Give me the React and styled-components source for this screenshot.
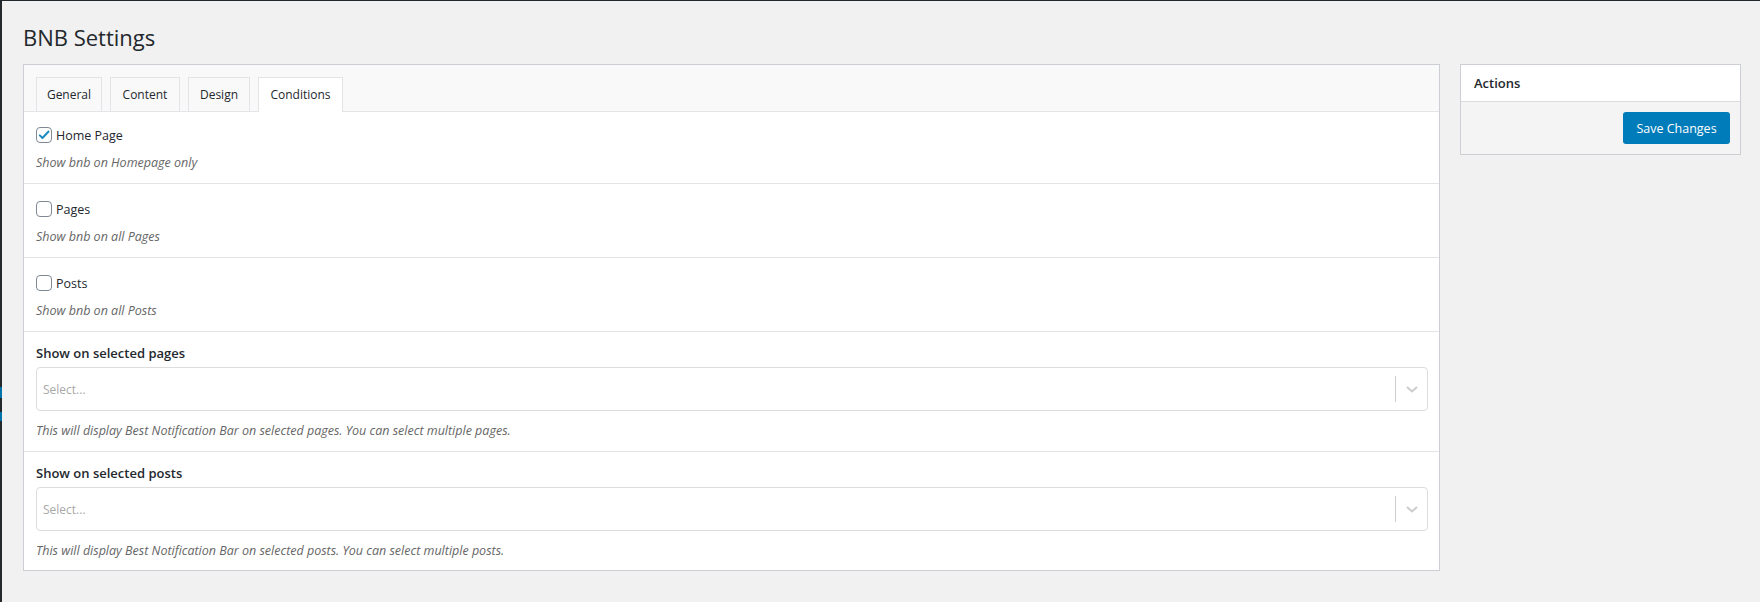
import React from "react";
import styled, { createGlobalStyle } from "styled-components";

const GlobalStyle = createGlobalStyle`
    html, body {
        margin: 0;
        padding: 0;
        background: #f1f1f1;
    }
    body {
        font-family: "Open Sans", "Noto Sans", sans-serif;
        color: #23282d;
        font-size: 13px;
    }
`;

const Screen = styled.div`
    width: 1760px;
    height: 602px;
    display: flex;
    border-top: 1px solid #23282d;
    box-sizing: border-box;
    overflow: hidden;
`;

const SideEdge = styled.div`
    width: 2px;
    flex: none;
    background: #23282d;
    position: relative;
    .mark {
        position: absolute;
        left: 0;
        width: 2px;
        background: #0073aa;
    }
`;

const Wrap = styled.div`
    flex: 1;
    padding: 0 19px 0 21px;
`;

const Title = styled.h1`
    margin: 0;
    padding: 22px 0 0;
    height: 63px;
    box-sizing: border-box;
    font-size: 22px;
    font-weight: 400;
    line-height: 29px;
    color: #23282d;
`;

const Columns = styled.div`
    display: flex;
    align-items: flex-start;
    gap: 20px;
`;

const Card = styled.div`
    flex: 1;
    background: #fff;
    border: 1px solid #ccd0d4;
`;

const TabBar = styled.div`
    display: flex;
    gap: 8px;
    padding: 12px 12px 0;
    background: #f9f9f9;
    border-bottom: 1px solid #e2e4e7;
    height: 47px;
    box-sizing: border-box;
`;

const Tab = styled.div`
    width: ${(p) => p.$w}px;
    box-sizing: border-box;
    text-align: center;
    line-height: 33px;
    font-size: 12px;
    border: 1px solid #e2e4e7;
    border-bottom: none;
    background: ${(p) => (p.$active ? "#fff" : "#f9f9f9")};
    margin-bottom: ${(p) => (p.$active ? "-1px" : "0")};
    height: ${(p) => (p.$active ? "35px" : "34px")};
    color: #23282d;
`;

const Row = styled.div`
    padding: ${(p) => (p.$first ? "13px 12px 11px" : "15px 12px 11px")};
    border-bottom: 1px solid #e2e4e7;
    &:last-child {
        border-bottom: none;
        padding-bottom: 10px;
    }
`;

const SelectRow = styled(Row)`
    padding: 11px 11px 11px 12px;
`;

const CheckLine = styled.label`
    display: flex;
    align-items: center;
    gap: 4px;
    height: 20px;
    font-size: 12.5px;
`;

const Box = styled.span`
    width: 16px;
    height: 16px;
    box-sizing: border-box;
    border: 1px solid #7e8993;
    border-radius: 4px;
    background: #fff;
    display: flex;
    align-items: center;
    justify-content: center;
    svg {
        display: block;
    }
`;

const Desc = styled.p`
    margin: 9px 0 0;
    font-size: 12.5px;
    line-height: 18px;
    font-style: italic;
    color: #666;
`;

const FieldLabel = styled.div`
    font-size: 13px;
    font-weight: 600;
    line-height: 20px;
`;

const SelectBox = styled.div`
    margin-top: 4px;
    height: 44px;
    box-sizing: border-box;
    border: 1px solid #ddd;
    border-radius: 4px;
    display: flex;
    align-items: center;
    background: #fff;
    .placeholder {
        flex: 1;
        padding-left: 6px;
        font-size: 12px;
        color: #a9a9a9;
    }
    .sep {
        width: 1px;
        height: 26px;
        background: #ccc;
    }
    .arrow {
        width: 31px;
        display: flex;
        justify-content: center;
    }
`;

const SelectDesc = styled(Desc)`
    margin-top: 11px;
`;

const Side = styled.div`
    width: 281px;
    box-sizing: border-box;
    flex: none;
    border: 1px solid #ccd0d4;
    background: #fff;
`;

const SideHead = styled.div`
    height: 36px;
    line-height: 36px;
    padding-left: 13px;
    font-size: 13px;
    font-weight: 600;
    border-bottom: 1px solid #dcdcde;
`;

const SideFoot = styled.div`
    display: flex;
    justify-content: flex-end;
    padding: 10px 10px 10px;
    background: #f4f4f4;
`;

const Button = styled.button`
    height: 32px;
    width: 107px;
    border: none;
    border-radius: 3px;
    background: #007cba;
    color: #fff;
    font-family: inherit;
    font-size: 12.5px;
    padding: 0;
`;

function Checkbox({ checked }) {
    return (
        <Box>
            {checked && (
                <svg width="14" height="14" viewBox="0 0 20 20">
                    <path d="M4 10.5l3.8 3.8L16.5 5" fill="none" stroke="#1e8cbe" strokeWidth="2.8" strokeLinecap="round" strokeLinejoin="round" />
                </svg>
            )}
        </Box>
    );
}

function Select() {
    return (
        <SelectBox>
            <span className="placeholder">Select...</span>
            <span className="sep" />
            <span className="arrow">
                <svg width="14" height="10" viewBox="0 0 14 10">
                    <path d="M2 3l5 4.5L12 3" fill="none" stroke="#ccc" strokeWidth="2" />
                </svg>
            </span>
        </SelectBox>
    );
}

const tabs = [
    { name: "General", w: 66 },
    { name: "Content", w: 70 },
    { name: "Design", w: 62 },
    { name: "Conditions", w: 85, active: true },
];

const checks = [
    { label: "Home Page", desc: "Show bnb on Homepage only", checked: true },
    { label: "Pages", desc: "Show bnb on all Pages" },
    { label: "Posts", desc: "Show bnb on all Posts" },
];

export default function App() {
    return (
        <>
            <GlobalStyle />
            <Screen>
                <SideEdge>
                    <span className="mark" style={{ top: 386, height: 11 }} />
                    <span className="mark" style={{ top: 411, height: 9 }} />
                </SideEdge>
                <Wrap>
                    <Title>BNB Settings</Title>
                    <Columns>
                        <Card>
                            <TabBar>
                                {tabs.map((t) => (
                                    <Tab key={t.name} $w={t.w} $active={t.active}>
                                        {t.name}
                                    </Tab>
                                ))}
                            </TabBar>
                            {checks.map((c, i) => (
                                <Row key={c.label} $first={i === 0}>
                                    <CheckLine>
                                        <Checkbox checked={c.checked} />
                                        {c.label}
                                    </CheckLine>
                                    <Desc>{c.desc}</Desc>
                                </Row>
                            ))}
                            <SelectRow>
                                <FieldLabel>Show on selected pages</FieldLabel>
                                <Select />
                                <SelectDesc>
                                    This will display Best Notification Bar on selected pages. You can select multiple pages.
                                </SelectDesc>
                            </SelectRow>
                            <SelectRow>
                                <FieldLabel>Show on selected posts</FieldLabel>
                                <Select />
                                <SelectDesc>
                                    This will display Best Notification Bar on selected posts. You can select multiple posts.
                                </SelectDesc>
                            </SelectRow>
                        </Card>
                        <Side>
                            <SideHead>Actions</SideHead>
                            <SideFoot>
                                <Button>Save Changes</Button>
                            </SideFoot>
                        </Side>
                    </Columns>
                </Wrap>
            </Screen>
        </>
    );
}
